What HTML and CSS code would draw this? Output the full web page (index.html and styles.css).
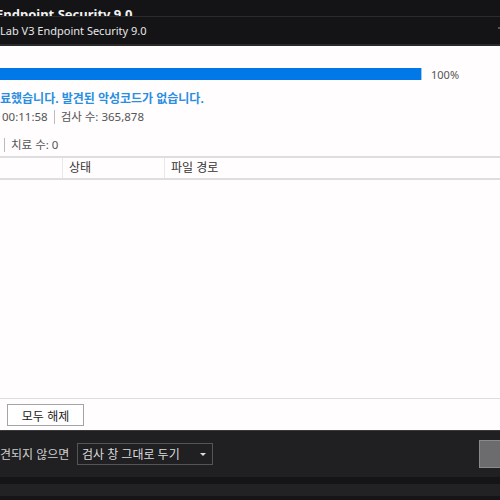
FILE: index.html
```html
<!DOCTYPE html>
<html lang="ko">
<head>
<meta charset="utf-8">
<title>V3</title>
<link rel="stylesheet" href="styles.css">
</head>
<body>
<div class="app">
  <div class="outer-title"><span>Endpoint Security 9.0</span></div>
  <div class="titlebar"><span>Lab V3 Endpoint Security 9.0</span><i class="edge"></i></div>
  <div class="content">
    <div class="progress-row">
      <div class="bar"><div class="fill" style="width:100%"></div></div>
      <span class="pct">100%</span>
    </div>
    <div class="msg">료했습니다. 발견된 악성코드가 없습니다.</div>
    <div class="stats"><span>00:11:58</span><i class="sep"></i><span>검사 수: 365,878</span></div>
    <div class="stats cure"><i class="sep"></i><span>치료 수: 0</span></div>
    <div class="table">
      <div class="thead">
        <div class="th c1"></div>
        <div class="th c2">상태</div>
        <div class="th c3">파일 경로</div>
      </div>
      <div class="tbody"></div>
    </div>
    <div class="buttons">
      <button class="btn hidden-left">모두 선택</button>
      <button class="btn">모두 해제</button>
    </div>
  </div>
  <div class="footer">
    <span class="flabel">견되지 않으면</span>
    <div class="select"><span>검사 창 그대로 두기</span><i class="caret"></i></div>
    <div class="spacer"></div>
    <div class="gbtn"></div>
  </div>
  <div class="bottom">
    <div class="stripe"></div>
  </div>
</div>
</body>
</html>
```
FILE: styles.css
```css
html, body {
  margin: 0;
  padding: 0;
  width: 500px;
  height: 500px;
  overflow: hidden;
  background: #141316;
}
.app {
  width: 500px;
  height: 500px;
  display: flex;
  flex-direction: column;
  font-family: "Noto Sans", "Noto Sans CJK KR", sans-serif;
  overflow: hidden;
}
.outer-title {
  height: 16px;
  background: #141316;
  border-bottom: 1px solid #2c2b2e;
  overflow: hidden;
}
.outer-title span {
  display: block;
  margin-left: -4px;
  margin-top: 8px;
  color: #f2f2f2;
  font-size: 13px;
  font-weight: 700;
  line-height: 13px;
  white-space: nowrap;
}
.titlebar {
  height: 27px;
  background: #141316;
  border-bottom: 2px solid #2a292c;
  display: flex;
  align-items: center;
  position: relative;
}
.titlebar span {
  color: #e6e6e6;
  font-size: 11px;
  white-space: nowrap;
}
.titlebar .edge {
  position: absolute;
  right: 0;
  top: 10px;
  width: 2px;
  height: 2px;
  background: #555;
}
.content {
  background: #fffdfd;
  height: 384px;
  display: flex;
  flex-direction: column;
  border-bottom: 1px solid #3a393c;
}
.progress-row {
  display: flex;
  align-items: center;
  margin-top: 22px;
  height: 12px;
}
.bar {
  width: 421px;
  height: 12px;
  background: #0078e8;
  box-shadow: 1px 0 0 #9ccbf2;
}
.fill {
  height: 100%;
  background: #0078e8;
}
.pct {
  margin-left: 10px;
  font-size: 11px;
  color: #555;
}
.msg {
  margin-top: 11px;
  color: #2a8ee2;
  font-size: 12px;
  font-weight: 700;
  line-height: 16px;
  white-space: nowrap;
}
.stats {
  display: flex;
  align-items: center;
  font-size: 11.5px;
  color: #555;
  line-height: 18px;
  margin-top: 1px;
  padding-left: 2px;
  white-space: nowrap;
}
.stats .sep {
  width: 1px;
  height: 14px;
  background: #bbb;
  margin: 0 6px;
}
.stats.cure {
  margin-top: 10px;
  padding-left: 0;
}
.stats.cure .sep {
  margin-left: 4px;
}
.table {
  margin-top: 2px;
  flex: 1;
  display: flex;
  flex-direction: column;
  border-top: 2px solid #dedede;
  border-bottom: 1px solid #dedede;
}
.thead {
  display: flex;
  height: 20px;
  border-bottom: 2px solid #dedede;
}
.th {
  font-size: 12px;
  color: #333;
  line-height: 20px;
  padding-left: 6px;
  box-sizing: border-box;
}
.c1 { width: 63px; border-right: 1px solid #e8e8e8; }
.c2 { width: 102px; border-right: 1px solid #e8e8e8; }
.c3 { flex: 1; }
.tbody { flex: 1; }
.buttons {
  display: flex;
  gap: 8px;
  margin-left: -78px;
  margin-top: 5px;
  margin-bottom: 4px;
}
.btn {
  width: 77px;
  height: 22px;
  background: #fff;
  border: 1px solid #a4a4a4;
  font-family: "Noto Sans CJK KR", sans-serif;
  font-size: 12px;
  color: #222;
  padding: 0;
}
.footer {
  height: 46px;
  background: #201f22;
  display: flex;
  align-items: center;
}
.flabel {
  color: #cfcfcf;
  font-size: 12px;
  white-space: nowrap;
  width: 77px;
}
.select {
  width: 130px;
  height: 20px;
  border: 1px solid #555;
  display: flex;
  align-items: center;
  padding-left: 4px;
  position: relative;
}
.select span {
  color: #dcdcdc;
  font-size: 12px;
  flex: 1;
}
.caret {
  width: 0;
  height: 0;
  border-left: 3px solid transparent;
  border-right: 3px solid transparent;
  border-top: 3px solid #ddd;
  margin-right: 6px;
}
.spacer { flex: 1; }
.gbtn {
  width: 20px;
  height: 26px;
  background: #6c6b6e;
  border: 1px solid #8a898c;
  border-right: none;
}
.bottom {
  flex: 1;
  background: #151417;
  padding-top: 7px;
}
.stripe {
  height: 12px;
  background: #222124;
}
```
